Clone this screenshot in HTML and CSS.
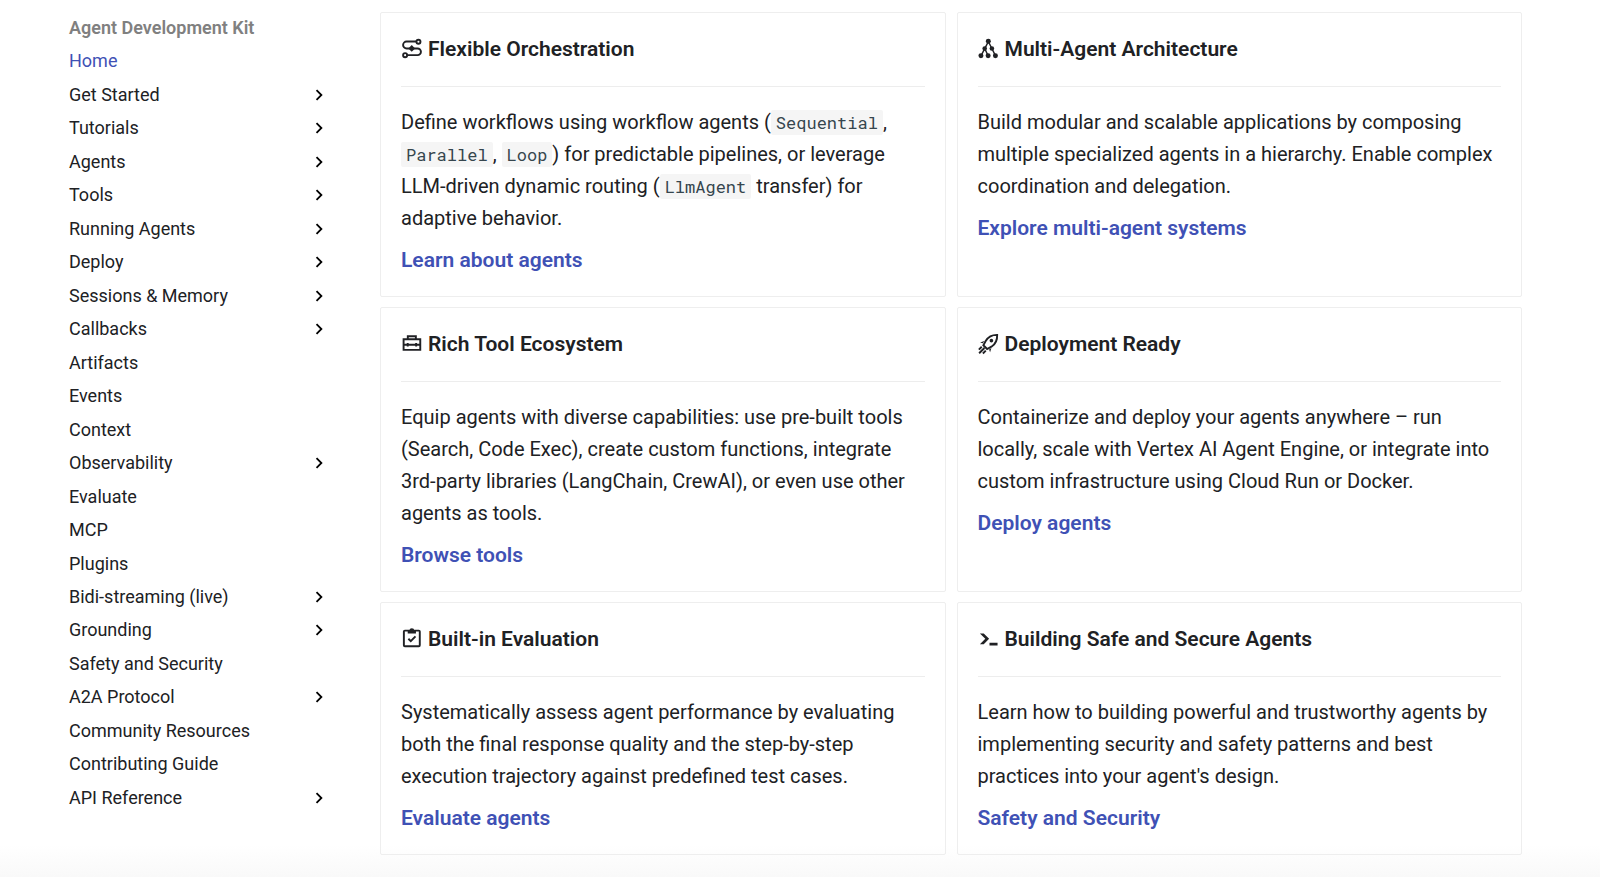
FILE: index.html
```html
<!DOCTYPE html>
<html lang="en">
<head>
    <meta charset="UTF-8">
    <meta name="viewport" content="width=device-width, initial-scale=1.0">
    <title>Agent Development Kit</title>
    <link rel="stylesheet" href="styles.css">
</head>
<body>
    <svg class="sprite" aria-hidden="true">
        <symbol id="chevron" viewBox="0 0 24 24">
            <path d="M8.59 16.58 13.17 12 8.59 7.41 10 6l6 6-6 6z"/>
        </symbol>
    </svg>
    <div class="container">
        <nav class="sidebar" aria-label="Agent Development Kit">
            <span class="nav-title">Agent Development Kit</span>
            <a href="#" class="active">Home</a>
            <a href="#">Get Started <svg><use href="#chevron"/></svg></a>
            <a href="#">Tutorials <svg><use href="#chevron"/></svg></a>
            <a href="#">Agents <svg><use href="#chevron"/></svg></a>
            <a href="#">Tools <svg><use href="#chevron"/></svg></a>
            <a href="#">Running Agents <svg><use href="#chevron"/></svg></a>
            <a href="#">Deploy <svg><use href="#chevron"/></svg></a>
            <a href="#">Sessions &amp; Memory <svg><use href="#chevron"/></svg></a>
            <a href="#">Callbacks <svg><use href="#chevron"/></svg></a>
            <a href="#">Artifacts</a>
            <a href="#">Events</a>
            <a href="#">Context</a>
            <a href="#">Observability <svg><use href="#chevron"/></svg></a>
            <a href="#">Evaluate</a>
            <a href="#">MCP</a>
            <a href="#">Plugins</a>
            <a href="#">Bidi-streaming (live) <svg><use href="#chevron"/></svg></a>
            <a href="#">Grounding <svg><use href="#chevron"/></svg></a>
            <a href="#">Safety and Security</a>
            <a href="#">A2A Protocol <svg><use href="#chevron"/></svg></a>
            <a href="#">Community Resources</a>
            <a href="#">Contributing Guide</a>
            <a href="#">API Reference <svg><use href="#chevron"/></svg></a>
        </nav>
        <main class="cards">
            <section class="card">
                <h2>
                    <svg class="icon line" viewBox="0 0 24 24"><path d="M16 3.7H5.8a3.6 3.6 0 0 0 0 7.2h11.5a3.5 3.5 0 0 1 0 7H6.5"/><circle cx="18.2" cy="3.9" r="2.1"/><circle cx="4.3" cy="17.9" r="2.1"/><path class="solid" d="m11.2 7.4 3.5 3.5-3.5 3.5-3.5-3.5z"/></svg>
                    Flexible Orchestration
                </h2>
                <hr>
                <p>Define workflows using workflow agents (<code>Sequential</code>, <code>Parallel</code>, <code>Loop</code>) for predictable pipelines, or leverage LLM-driven dynamic routing (<code>LlmAgent</code> transfer) for adaptive behavior.</p>
                <a href="#">Learn about agents</a>
            </section>
            <section class="card">
                <h2>
                    <svg class="icon" viewBox="0 0 24 24"><path class="links" d="M10.8 3.7 3.1 18.6M10.800 3.700l7.500 14.900M7 11l3.600 7.600"/><circle cx="10.800" cy="3.500" r="2.600"/><circle cx="7" cy="11" r="2.400"/><circle cx="14.500" cy="11" r="2.400"/><circle cx="3.100" cy="18.500" r="2.600"/><circle cx="10.600" cy="18.500" r="2.600"/><circle cx="18.200" cy="18.500" r="2.600"/></svg>
                    Multi-Agent Architecture
                </h2>
                <hr>
                <p>Build modular and scalable applications by composing multiple specialized agents in a hierarchy. Enable complex coordination and delegation.</p>
                <a href="#">Explore multi-agent systems</a>
            </section>
            <section class="card">
                <h2>
                    <svg class="icon line" viewBox="0 0 24 24"><path d="M2.700 6.500h17.400v11.100H2.700zM7.100 6.300V3.400h8.400v2.900M2.700 12.200h17.400M7 10.500v3.600M15.800 10.500v3.600"/></svg>
                    Rich Tool Ecosystem
                </h2>
                <hr>
                <p>Equip agents with diverse capabilities: use pre-built tools (Search, Code Exec), create custom functions, integrate 3rd-party libraries (LangChain, CrewAI), or even use other agents as tools.</p>
                <a href="#">Browse tools</a>
            </section>
            <section class="card">
                <h2>
                    <svg class="icon line" viewBox="0 -1 24 24"><path d="M20 1c-5.300-.1-9.300 2-12 6.300l-2.400 4.500 3.900 3.900 4.500-2.400C18.200 10.600 20.200 6.400 20 1zM.9 16.300l3-3M1.200 20.100l5.500-5.500M5.100 20.400l3-3"/><circle class="solid" cx="14" cy="7" r="1.900"/><path class="solid" d="M6.700 7.300 2.200 8.800l2.800 1zM14 14.600l-1.400 4.400-1-2.700z"/></svg>
                    Deployment Ready
                </h2>
                <hr>
                <p>Containerize and deploy your agents anywhere – run locally, scale with Vertex AI Agent Engine, or integrate into custom infrastructure using Cloud Run or Docker.</p>
                <a href="#">Deploy agents</a>
            </section>
            <section class="card">
                <h2>
                    <svg class="icon line" viewBox="0 0 24 24"><rect x="3" y="2.700" width="16.600" height="16.300" rx="1"/><path d="m7.700 11.200 2.500 2.500 4.900-5"/><path class="solid" d="M7 2.700h1.800a2.500 2.500 0 0 1 5 0h1.800v3H7z"/></svg>
                    Built-in Evaluation
                </h2>
                <hr>
                <p>Systematically assess agent performance by evaluating both the final response quality and the step-by-step execution trajectory against predefined test cases.</p>
                <a href="#">Evaluate agents</a>
            </section>
            <section class="card">
                <h2>
                    <svg class="icon" viewBox="0 0 24 24"><path d="M12 15.500h8.400v2.800H12zM7.600 11.300 2 5.700h4l5.600 5.600L6 16.900H2z"/></svg>
                    Building Safe and Secure Agents
                </h2>
                <hr>
                <p>Learn how to building powerful and trustworthy agents by implementing security and safety patterns and best practices into your agent's design.</p>
                <a href="#">Safety and Security</a>
            </section>
        </main>
    </div>
</body>
</html>
```
FILE: styles.css
```css
/* Basic Reset */
* {
    margin: 0;
    padding: 0;
    box-sizing: border-box;
}

body {
    font-family: "Google Sans", Roboto, sans-serif;
    font-size: 20px;
    line-height: 32px;
    color: #202124;
    background: linear-gradient(to top, #f9f9f9, #fff 32px);
    min-height: 100vh;
}

a {
    color: #3f51b5;
    text-decoration: none;
}

.sprite {
    position: absolute;
    width: 0;
    height: 0;
}

.container {
    display: flex;
    gap: 50px;
    padding: 12px 78px 22px 69px;
}

/* Sidebar */
.sidebar {
    display: flex;
    flex-direction: column;
    justify-content: space-between;
    flex: 0 0 261px;
    padding: 5px 0 46px;
    font-size: 18px;
    line-height: 22px;
}

.sidebar a {
    display: flex;
    align-items: center;
    justify-content: space-between;
    color: #202124;
}

.sidebar a.active {
    color: #3f51b5;
}

.sidebar svg {
    width: 22px;
    height: 22px;
}

.nav-title {
    font-weight: 600;
    color: #808080;
}

/* Cards */
.cards {
    flex: 1;
    display: grid;
    grid-template-columns: 1fr 1fr;
    gap: 10px 11px;
}

.card {
    padding: 20px;
    border: 1px solid #eee;
    border-radius: 2px;
}

.card h2 {
    display: flex;
    align-items: center;
    gap: 4px;
    font-size: 21px;
    font-weight: 600;
}

.card hr {
    margin: 21px 0 19px;
    border: none;
    border-top: 1px solid #ededed;
}

.card p {
    margin-bottom: 10px;
}

.card > a {
    font-size: 21px;
    font-weight: 600;
}

code {
    padding: 1px 5px;
    font-family: "Roboto Mono", "Liberation Mono", monospace;
    font-size: 17px;
    line-height: 1;
    color: #36464e;
    background-color: #f5f5f5;
    border-radius: 2px;
}

/* Icons */
.icon {
    width: 23px;
    height: 23px;
    fill: currentColor;
}

.icon.line {
    fill: none;
    stroke: currentColor;
    stroke-width: 2;
}

.icon .solid {
    fill: currentColor;
    stroke: none;
}

.icon .links {
    stroke: currentColor;
    stroke-width: 1.5;
}
```
